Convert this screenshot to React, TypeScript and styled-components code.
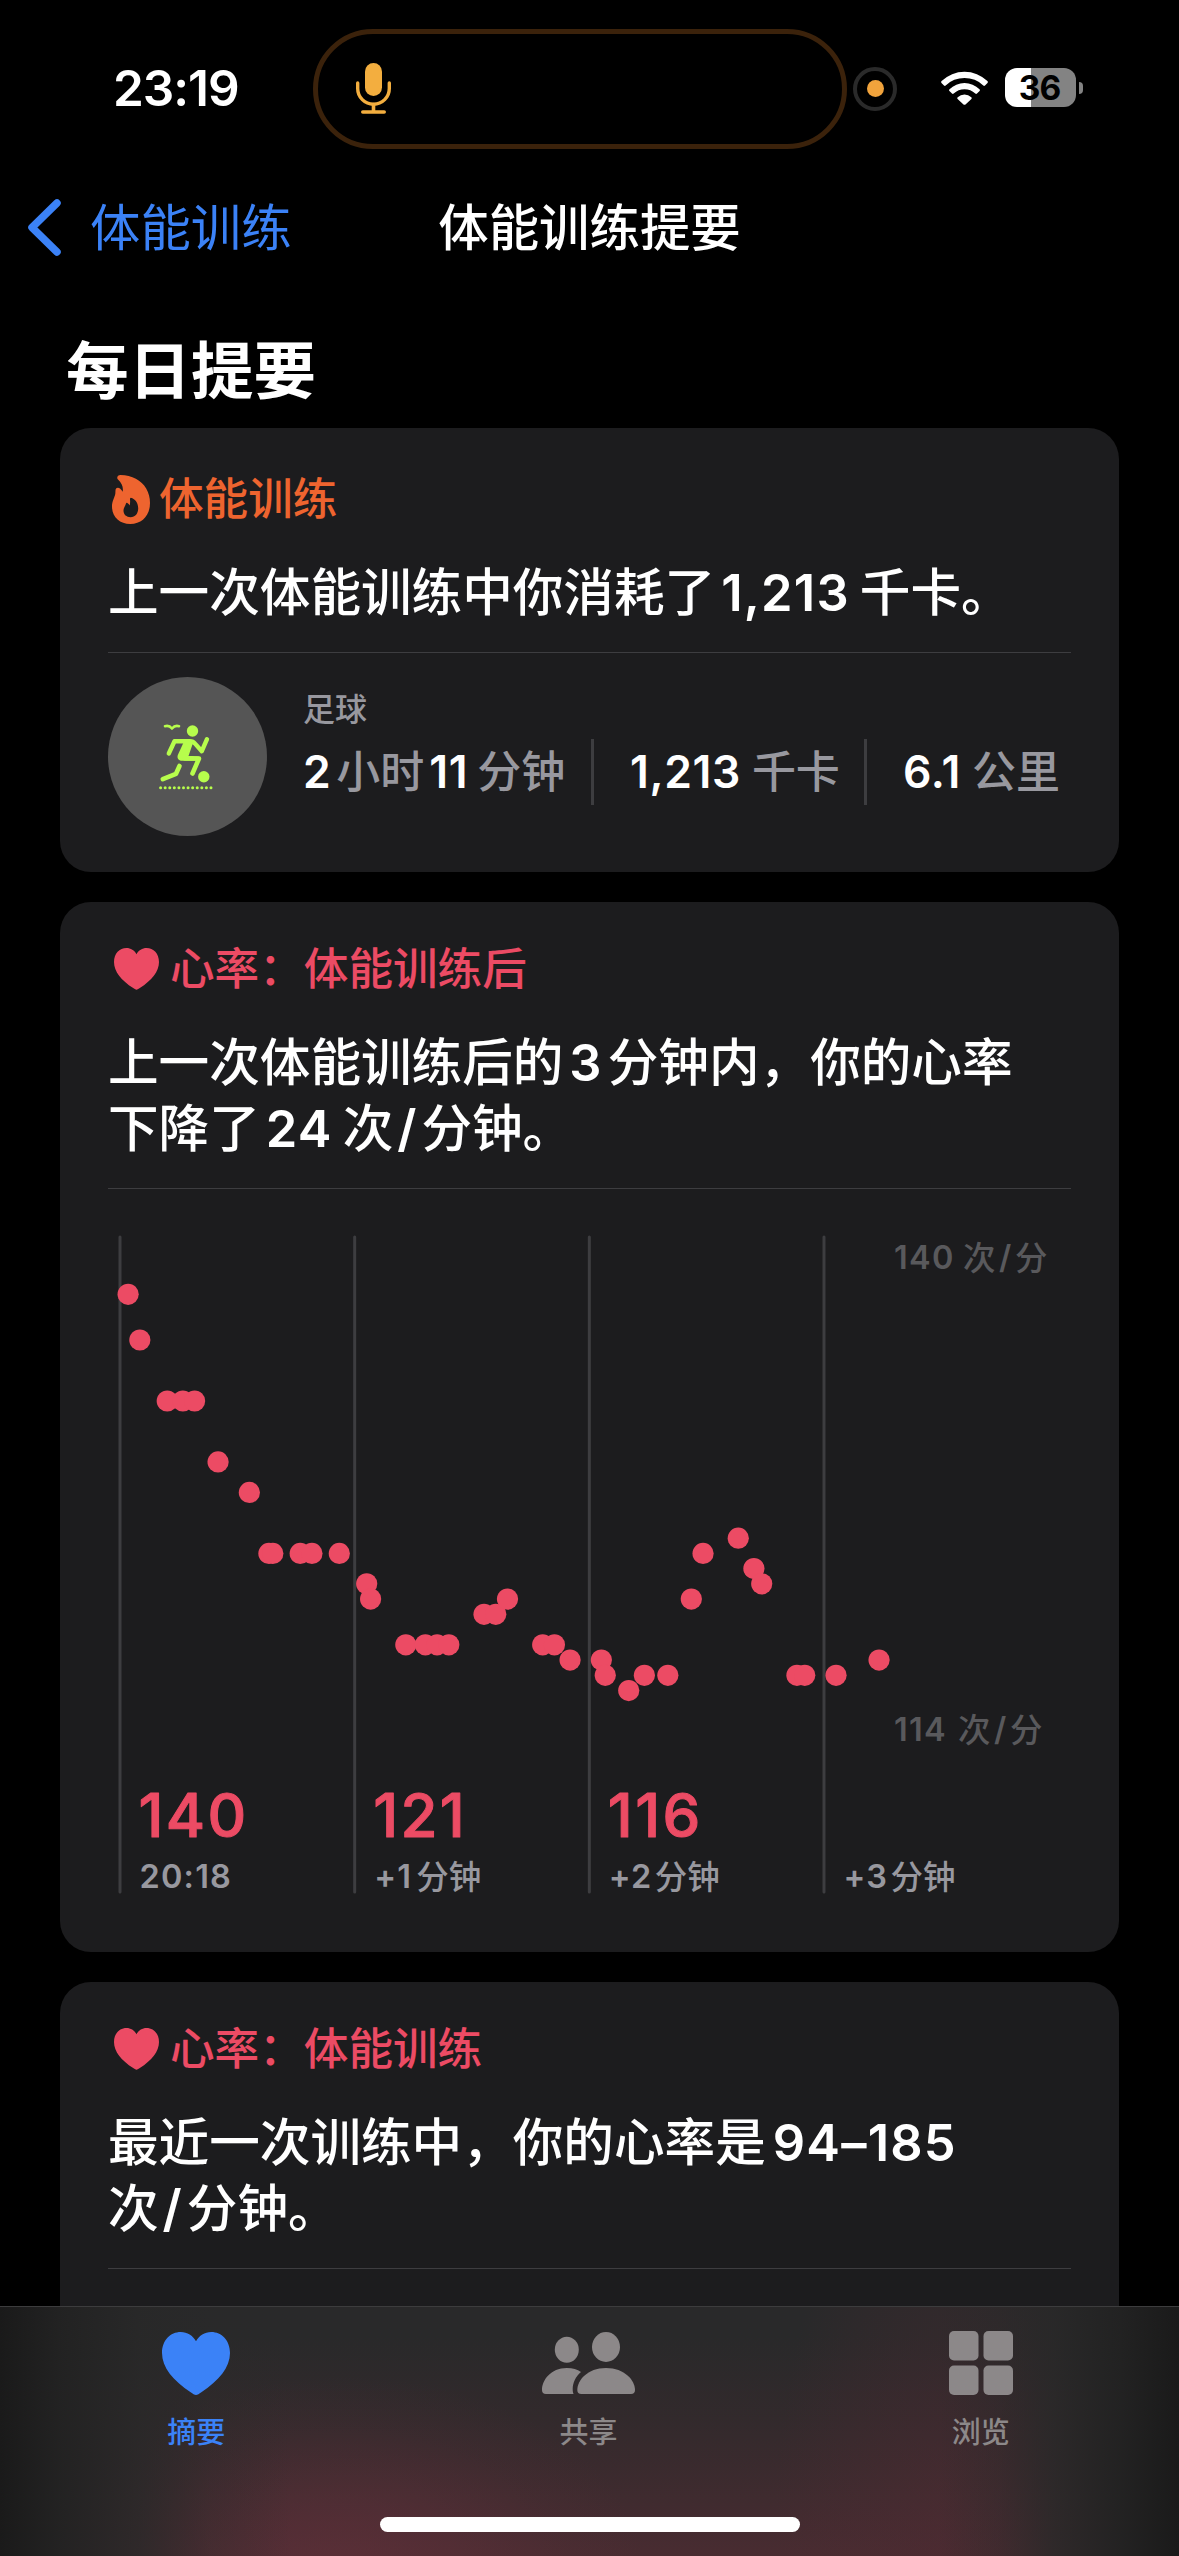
import React from "react";
import styled, { createGlobalStyle } from "styled-components";

const BLUE = "#3b82f7";
const ORANGE = "#ee642f";
const PINK = "#ec4b64";
const GRAY = "#98989f";
const FONT = `Inter, "Noto Sans CJK SC", sans-serif`;

const GlobalStyle = createGlobalStyle`
  *, *::before, *::after { box-sizing: border-box; }
  html, body { margin: 0; padding: 0; background: #000; }
  body { font-family: ${FONT}; color: #fff; text-autospace: no-autospace; text-spacing-trim: space-all; }
  svg { display: block; flex: none; }
`;

const Screen = styled.div`
  width: 1179px;
  height: 2556px;
  overflow: hidden;
  display: flex;
  flex-direction: column;
  background: #000;
`;

/* Status bar */
const StatusBar = styled.header`
  flex: none;
  height: 177px;
  display: flex;
  align-items: center;
  padding-left: 113px;
`;
const Clock = styled.div`
  width: 200px;
  margin-bottom: 2px;
  font-size: 49.5px;
  line-height: 60px;
  font-weight: 600;
  letter-spacing: -1px;
  white-space: nowrap;
`;
const Island = styled.div`
  width: 534px;
  height: 120px;
  border: 5px solid #3b220b;
  border-radius: 60px;
  display: flex;
  align-items: center;
  padding-left: 38px;
`;
const MicIndicator = styled.div`
  margin-left: 6px;
  width: 44px;
  height: 44px;
  border: 4px solid #2a2a2a;
  border-radius: 50%;
  display: flex;
  align-items: center;
  justify-content: center;
  &::after {
    content: "";
    width: 17px;
    height: 17px;
    border-radius: 50%;
    background: #f1a33c;
  }
`;
const WifiSlot = styled.div`
  margin: 0 17px 2px 44px;
`;
const Battery = styled.div`
  display: flex;
  align-items: center;
  gap: 3px;
  margin-bottom: 2px;
`;
const BatteryBody = styled.div<{ $level: number }>`
  width: 71px;
  height: 39px;
  border-radius: 12px;
  background: linear-gradient(to right, #fff ${(p) => p.$level}%, #838383 ${(p) => p.$level}%);
  color: #000;
  font-size: 33.5px;
  line-height: 40px;
  font-weight: 700;
  text-align: center;
  letter-spacing: -1px;
  padding-right: 2px;
`;
const BatteryTip = styled.div`
  width: 4px;
  height: 12px;
  border-radius: 0 4px 4px 0;
  background: #838383;
`;

/* Navigation */
const NavBar = styled.nav`
  flex: none;
  height: 100px;
  display: grid;
  grid-template-columns: 1fr auto 1fr;
  align-items: center;
  font-size: 50.4px;
  line-height: 66px;
`;
const Back = styled.div`
  display: flex;
  align-items: center;
  gap: 28px;
  padding-left: 27px;
  color: ${BLUE};
`;
const BackLabel = styled.span`
  padding-top: 2px;
`;
const NavTitle = styled.div`
  padding-top: 2px;
  font-weight: 500;
`;

/* Content */
const Content = styled.main`
  flex: 1;
  min-height: 0;
  overflow: hidden;
  padding: 61px 60px 0;
`;
const SectionTitle = styled.h1`
  margin: 0 0 24px 6px;
  font-size: 62.5px;
  line-height: 66px;
  font-weight: 700;
`;
const CardList = styled.div`
  display: flex;
  flex-direction: column;
  gap: 30px;
`;
const Card = styled.section<{ $top: number; $height: number }>`
  flex: none;
  height: ${(p) => p.$height}px;
  padding: ${(p) => p.$top}px 48px 0;
  border-radius: 31px;
  background: #1c1c1e;
`;
const CardHeader = styled.div<{ $color: string; $inset: number; $gap: number }>`
  height: 50px;
  display: flex;
  align-items: center;
  gap: ${(p) => p.$gap}px;
  padding-left: ${(p) => p.$inset}px;
  color: ${(p) => p.$color};
  font-size: 44.6px;
  line-height: 50px;
  font-weight: 500;
`;
const Headline = styled.p`
  margin: 36px 0 0;
  font-size: 50.6px;
  line-height: 66px;
  font-weight: 500;
  white-space: nowrap;
`;
const Figure = styled.span<{ $l?: number; $r?: number }>`
  margin-left: ${(p) => p.$l ?? 6}px;
  margin-right: ${(p) => p.$r ?? 6}px;
  font-weight: 560;
  letter-spacing: 1.2px;
`;
const Slash = styled.span`
  margin: 0 5px 0 4px;
  font-weight: 560;
`;
const Divider = styled.div`
  height: 1px;
  margin-top: 26px;
  background: #3d3d40;
`;

/* Workout row */
const Workout = styled.div`
  display: flex;
  padding-top: 24px;
`;
const WorkoutBadge = styled.div`
  flex: none;
  width: 159px;
  height: 159px;
  border-radius: 50%;
  background: #555;
  display: flex;
  align-items: center;
  justify-content: center;
  padding-right: 3px;
`;
const WorkoutInfo = styled.div`
  padding: 13px 0 0 36px;
`;
const WorkoutName = styled.div`
  font-size: 32px;
  line-height: 40px;
  font-weight: 500;
  color: ${GRAY};
`;
const Stats = styled.div`
  display: flex;
  margin-top: 9px;
  height: 66px;
`;
const Stat = styled.div<{ $width: number }>`
  flex: none;
  width: ${(p) => p.$width}px;
  font-size: 44.5px;
  line-height: 66px;
  font-weight: 580;
  letter-spacing: 0.6px;
  white-space: nowrap;
  & + & {
    padding-left: 36px;
    border-left: 3px solid #3d3d40;
  }
`;
const Unit = styled.span<{ $l: number; $r?: number }>`
  margin-left: ${(p) => p.$l}px;
  margin-right: ${(p) => p.$r ?? 0}px;
  font-size: 44px;
  font-weight: 500;
  letter-spacing: 0;
  color: ${GRAY};
`;

/* Chart */
const Plot = styled.svg`
  overflow: visible;
  font-family: ${FONT};
`;
const Reading = styled.text`
  font-size: 60px;
  font-weight: 500;
  letter-spacing: 2.4px;
  fill: ${PINK};
  stroke: ${PINK};
  stroke-width: 1px;
  stroke-linejoin: round;
`;
const Tick = styled.text<{ $cjk?: boolean }>`
  font-size: 32.5px;
  font-weight: ${(p) => (p.$cjk ? 500 : 560)};
  letter-spacing: ${(p) => (p.$cjk ? 0 : 1.2)}px;
  fill: ${GRAY};
`;
const Bound = styled.text<{ $cjk?: boolean }>`
  font-size: 32.5px;
  font-weight: ${(p) => (p.$cjk ? 500 : 560)};
  letter-spacing: ${(p) => (p.$cjk ? 0 : 1.3)}px;
  fill: #59595c;
`;

/* Tab bar */
const TabBar = styled.footer`
  flex: none;
  height: 250px;
  display: flex;
  flex-direction: column;
  align-items: center;
  border-top: 1px solid #3c3c3d;
  background:
    linear-gradient(to right, #1a1a1a 0, rgba(34, 34, 34, 0.97) 60px, rgba(40, 40, 40, 0.8) 140px, rgba(41, 41, 41, 0.3) 210px, rgba(41, 41, 41, 0) 290px),
    linear-gradient(to left, #1a1a1a 0, rgba(34, 34, 34, 0.97) 60px, rgba(40, 40, 40, 0.8) 125px, rgba(41, 41, 41, 0.3) 180px, rgba(41, 41, 41, 0) 240px),
    radial-gradient(300px 200px at 345px 270px, rgba(98, 48, 58, 0.7) 0, rgba(98, 48, 58, 0.42) 40%, rgba(98, 48, 58, 0.12) 75%, rgba(98, 48, 58, 0) 100%),
    radial-gradient(170px 400px at 945px 230px, rgba(80, 42, 50, 0.45) 0, rgba(80, 42, 50, 0.26) 45%, rgba(80, 42, 50, 0) 100%),
    linear-gradient(rgba(76, 44, 50, 0) 30px, rgba(76, 44, 50, 0.25) 110px, rgba(76, 44, 50, 0.9) 250px),
    #29292a;
`;
const Tabs = styled.div`
  width: 1179px;
  padding-right: 2px;
  display: grid;
  grid-template-columns: repeat(3, 1fr);
`;
const Tab = styled.div<{ $active?: boolean }>`
  display: flex;
  flex-direction: column;
  align-items: center;
  padding-top: 24px;
  color: ${(p) => (p.$active ? BLUE : "#8c8889")};
  font-size: 29px;
  line-height: 36px;
  font-weight: 500;
`;
const TabIcon = styled.div`
  height: 64px;
  margin-bottom: 20px;
  display: flex;
  align-items: center;
`;
const HomeIndicator = styled.div`
  width: 420px;
  height: 15px;
  margin-top: 66px;
  border-radius: 8px;
  background: #fff;
`;

function MicIcon() {
  return (
    <svg width="35" height="51" viewBox="0 0 35 51" fill="none" stroke="#f3ae3f" strokeLinecap="round">
      <rect x="9" y="0" width="17" height="33" rx="8.5" fill="#f3ae3f" stroke="none" />
      <path d="M1.7 20v5.5a15.8 15.8 0 0 0 31.6 0V20" strokeWidth="3.4" />
      <path d="M17.5 41.5V48M6.8 49h21.4" strokeWidth="3.6" />
    </svg>
  );
}

function WifiIcon() {
  return (
    <svg width="47" height="35" viewBox="0 0 47 35" fill="#fff">
      <path d="M.6 11.1a32.8 32.8 0 0 1 45.8 0c.6.6.6 1.2.1 1.8l-2.5 2.6c-.5.5-1.2.5-1.7 0a27 27 0 0 0-37.6 0c-.5.5-1.2.5-1.7 0L.5 12.9c-.5-.6-.5-1.2.1-1.8Z" />
      <path d="M8.5 19.2a21.5 21.5 0 0 1 30 0c.6.6.6 1.2.1 1.8l-2.6 2.6c-.5.5-1.2.5-1.7 0a15.6 15.6 0 0 0-21.6 0c-.5.5-1.2.5-1.7 0l-2.6-2.6c-.5-.6-.5-1.2.1-1.8Z" />
      <path d="M16.7 27.2a10.2 10.2 0 0 1 13.6 0c.6.5.6 1.2.1 1.7l-5.9 5.5c-.6.6-1.4.6-2 0l-5.9-5.5c-.5-.5-.5-1.2.1-1.7Z" />
    </svg>
  );
}

function HeartIcon({ width }: { width: number }) {
  return (
    <svg width={width} height={(width * 63) / 68} viewBox="0 0 68 63" fill="currentColor">
      <path d="M34 63c-1.3 0-3.6-1.5-5-2.5C11 48.5 0 35.5 0 21 0 8.5 8.3 0 18.8 0 25.3 0 30.9 3.5 34 9.3 37.1 3.5 42.7 0 49.2 0 59.7 0 68 8.5 68 21c0 14.500-11 27.500-29 39.500-1.400 1-3.700 2.500-5 2.500Z" />
    </svg>
  );
}

function FlameIcon() {
  return (
    <svg width="38" height="49" viewBox="0 0 38 49" fill={ORANGE}>
      <path
        fillRule="evenodd"
        d="M8.5 0C20 0 29.5 5.5 34.2 13.5 36.8 18 38 22.5 38 28c0 12.500-8 21-19.700 21C7.500 49 0 42 0 31.500 0 26 2.700 22.500 3.300 18.800c.3-1.800-.2-4.300 1-5.500 1-1 2.700-.7 4 .4 1 .8 1.800 1.900 2.400 3.100.8-4.800-1-8.800-4.700-12.300C4.300 2.800 5.500 0 8.500 0ZM18.800 22.700c-.6.200-.9.800-.8 1.700.3 2.300.1 4.300-.3 6.200-.6-1.300-1.400-2.200-2.400-2.700-.7-.3-1.200 0-1.400.8-.5 2.200-2.400 3.800-2.400 6.900 0 4.200 3 6.600 7 6.600 4.700 0 7.700-3.800 7.700-9 0-5-2.800-9.200-7.400-10.500Z"
      />
    </svg>
  );
}

function SoccerIcon() {
  const turf = Array.from({ length: 12 }, (_, i) => 1.6 + i * 4.58);
  return (
    <svg width="54" height="68" viewBox="0 0 54 68" fill="none" stroke="#b7fd4c" strokeLinecap="round" strokeLinejoin="round">
      <path d="M6 3.200c2.800-.9 5.200.1 7 2.300 1.800-2.200 4.200-3.200 7-2.300" strokeWidth="2.6" />
      <circle cx="33.5" cy="8" r="5.7" fill="#b7fd4c" stroke="none" />
      <path d="M9.800 30.500 15.500 18.300H31c2.500 0 3.800.8 5.300 2.600l6.500 7.300 5.200-12" strokeWidth="4.4" />
      <path d="M25 18.500h9.500L29.500 33c3.500-.2 7.500.2 10 .5 1.500.2 2 1.300 1.500 2.800-.3 1-1 1.500-3 1.500H23c-3.500 0-5.200-2.600-4.200-5.800Z" fill="#b7fd4c" stroke="none" />
      <path d="M26 35.500h14L33.500 50.500" strokeWidth="4.6" />
      <path d="M20.500 43 17 50.800 3.800 56.200" strokeWidth="4.6" />
      <circle cx="44.8" cy="53.8" r="5.7" fill="#b7fd4c" stroke="none" />
      {turf.map((x) => (
        <circle key={x} cx={x} cy="64.8" r="1.5" fill="#b7fd4c" stroke="none" />
      ))}
    </svg>
  );
}

function PeopleIcon() {
  return (
    <svg width="93" height="62" viewBox="0 0 93 62" fill="currentColor">
      <ellipse cx="24.8" cy="17.8" rx="12" ry="13" />
      <ellipse cx="64" cy="15" rx="14" ry="15" />
      <path d="M39.300 62c-2.600 0-4-1.500-4-4 0-9.500 10-22 28.700-22s29 12.500 29 22c0 2.500-1.400 4-4 4Z" />
      <path d="M4 62c-2.600 0-4-1.500-4-4 0-9.500 8.500-22 24.800-22 6 0 10.500 1.500 14.200 4-5.500 4.500-8.300 11-8.300 17 0 2 .2 3.800.9 5Z" />
    </svg>
  );
}

function GridIcon() {
  return (
    <svg width="64" height="64" viewBox="0 0 64 64" fill="currentColor">
      {[0, 34.5].map((y) =>
        [0, 34.5].map((x) => <rect key={`${x}-${y}`} x={x} y={y} width="29.5" height="29.5" rx="5" />)
      )}
    </svg>
  );
}

/* [seconds after the workout, beats per minute] */
const SAMPLES: [number, number][] = [
  [2, 140], [5, 137], [12, 133], [16, 133], [19, 133], [25, 129], [33, 127],
  [38, 123], [39, 123], [46, 123], [49, 123], [56, 123], [63, 121], [64, 120],
  [73, 117], [78, 117], [81, 117], [84, 117], [93, 119], [96, 119], [99, 120],
  [108, 117], [111, 117], [115, 116], [123, 116], [124, 115], [130, 114],
  [134, 115], [140, 115], [146, 120], [149, 123], [158, 124], [162, 122],
  [164, 121], [173, 115], [175, 115], [183, 115], [194, 116],
];

const COLUMNS = [
  { value: "140", tick: "20:18", unit: "", unitX: 0 },
  { value: "121", tick: "+1", unit: "分钟", unitX: 62 },
  { value: "116", tick: "+2", unit: "分钟", unitX: 66 },
  { value: "", tick: "+3", unit: "分钟", unitX: 67 },
];

const ORIGIN_X = 12;
const MINUTE = 234.67;
const TOP_Y = 105.3;
const BEAT = 15.24;

function RecoveryChart() {
  return (
    <Plot width="963" height="763" viewBox="0 0 963 763">
      {COLUMNS.map((c, i) => {
        const x = ORIGIN_X + i * MINUTE;
        return (
          <g key={c.tick}>
            <line x1={x} x2={x} y1="48" y2="703" stroke="#3d3d40" strokeWidth="3" strokeLinecap="round" />
            <Reading x={x + 18.5} y="647.5">{c.value}</Reading>
            <Tick x={x + 19.5} y="699">{c.tick}</Tick>
            {c.unit && <Tick $cjk x={x + c.unitX - 0.5} y="700">{c.unit}</Tick>}
          </g>
        );
      })}
      {SAMPLES.map(([s, bpm]) => (
        <circle key={s} cx={ORIGIN_X + (s * MINUTE) / 60 + 0.3} cy={TOP_Y + (140 - bpm) * BEAT} r="10.6" fill={PINK} />
      ))}
      <Bound x="786" y="80">140</Bound>
      <Bound $cjk x="855" y="81">次</Bound>
      <Bound x="891" y="80">/</Bound>
      <Bound $cjk x="907" y="81">分</Bound>
      <Bound x="786" y="552">114</Bound>
      <Bound $cjk x="850" y="553">次</Bound>
      <Bound x="886" y="552">/</Bound>
      <Bound $cjk x="902" y="553">分</Bound>
    </Plot>
  );
}

export default function App() {
  return (
    <Screen>
      <GlobalStyle />
      <StatusBar>
        <Clock>23:19</Clock>
        <Island><MicIcon /></Island>
        <MicIndicator />
        <WifiSlot><WifiIcon /></WifiSlot>
        <Battery>
          <BatteryBody $level={36}>36</BatteryBody>
          <BatteryTip />
        </Battery>
      </StatusBar>
      <NavBar>
        <Back>
          <svg width="35" height="59" viewBox="0 0 35 59" fill="none" stroke="currentColor" strokeWidth="7.5" strokeLinecap="round" strokeLinejoin="round">
            <path d="M30 5 5 29.5 30 54" />
          </svg>
          <BackLabel>体能训练</BackLabel>
        </Back>
        <NavTitle>体能训练提要</NavTitle>
      </NavBar>
      <Content>
        <SectionTitle>每日提要</SectionTitle>
        <CardList>
          <Card $top={46} $height={444}>
            <CardHeader $color={ORANGE} $inset={4} $gap={9}>
              <FlameIcon />体能训练
            </CardHeader>
            <Headline>上一次体能训练中你消耗了<Figure $r={10}>1,213</Figure>千卡。</Headline>
            <Divider />
            <Workout>
              <WorkoutBadge><SoccerIcon /></WorkoutBadge>
              <WorkoutInfo>
                <WorkoutName>足球</WorkoutName>
                <Stats>
                  <Stat $width={288}>
                    2<Unit $l={5} $r={5}>小时</Unit>11<Unit $l={9}>分钟</Unit>
                  </Stat>
                  <Stat $width={273}>1,213<Unit $l={11}>千卡</Unit></Stat>
                  <Stat $width={210}>6.1<Unit $l={11}>公里</Unit></Stat>
                </Stats>
              </WorkoutInfo>
            </Workout>
          </Card>
          <Card $top={42} $height={1050}>
            <CardHeader $color={PINK} $inset={6} $gap={11}>
              <HeartIcon width={45} />心率：体能训练后
            </CardHeader>
            <Headline>
              上一次体能训练后的<Figure $r={5}>3</Figure>分钟内，你的心率
              <br />
              下降了<Figure $r={10}>24</Figure>次<Slash>/</Slash>分钟。
            </Headline>
            <Divider />
            <RecoveryChart />
          </Card>
          <Card $top={42} $height={700}>
            <CardHeader $color={PINK} $inset={6} $gap={11}>
              <HeartIcon width={45} />心率：体能训练
            </CardHeader>
            <Headline>
              最近一次训练中，你的心率是<Figure $l={7}>94–185</Figure>
              <br />
              次<Slash>/</Slash>分钟。
            </Headline>
            <Divider />
          </Card>
        </CardList>
      </Content>
      <TabBar>
        <Tabs>
          <Tab $active><TabIcon><HeartIcon width={68} /></TabIcon>摘要</Tab>
          <Tab><TabIcon><PeopleIcon /></TabIcon>共享</Tab>
          <Tab><TabIcon><GridIcon /></TabIcon>浏览</Tab>
        </Tabs>
        <HomeIndicator />
      </TabBar>
    </Screen>
  );
}
